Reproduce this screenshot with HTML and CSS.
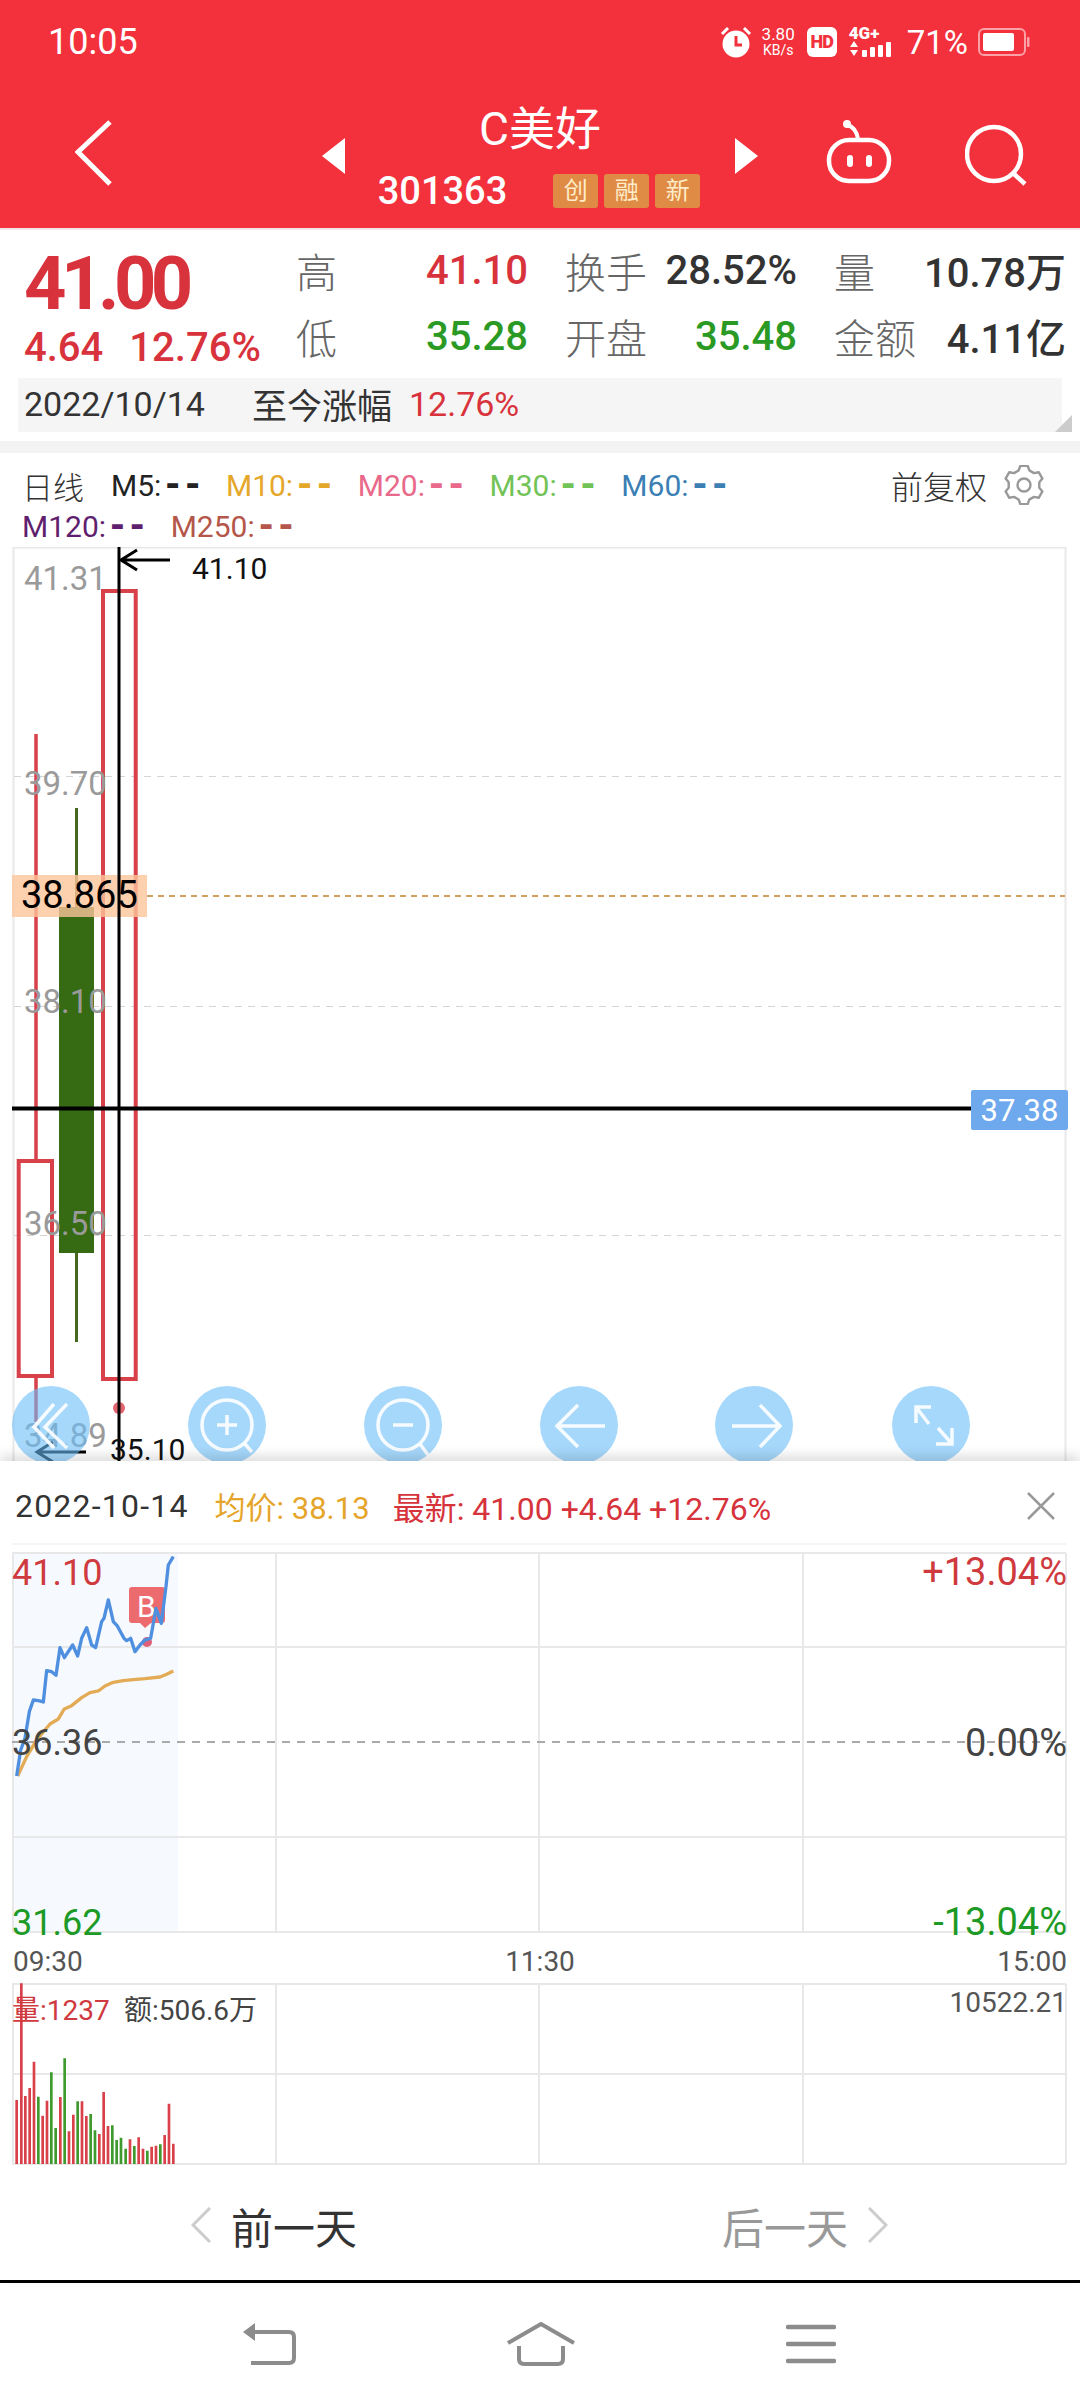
FILE: index.html
```html
<!DOCTYPE html>
<html lang="zh-CN">
<head>
    <meta charset="UTF-8">
    <meta name="viewport" content="width=device-width, initial-scale=1.0">
    <title>C美好 301363</title>
    <link rel="stylesheet" href="styles.css">
</head>
<body>

    <header class="top">
        <div class="status">
            <span class="clock">10:05</span>
            <div class="status-icons">
                <svg class="ico-alarm" width="32" height="32" viewBox="0 0 32 32">
                    <circle cx="16" cy="18" r="13.5" fill="#fff"/>
                    <path d="M2 8 L8 2 M30 8 L24 2" stroke="#fff" stroke-width="3" fill="none"/>
                    <path d="M16 10 V19 H22" stroke="#f3313c" stroke-width="3" fill="none"/>
                </svg>
                <div class="netspeed"><span>3.80</span><span class="unit">KB/s</span></div>
                <span class="hd">HD</span>
                <div class="signal">
                    <span class="lte">4G+</span>
                    <svg width="48" height="18" viewBox="0 0 48 18">
                        <path d="M1 7 L5 1 L9 7 Z M1 10 L9 10 L5 16 Z" fill="#fff"/>
                        <rect x="13" y="10" width="5" height="7" rx="1" fill="#fff"/>
                        <rect x="21" y="7" width="5" height="10" rx="1" fill="#fff"/>
                        <rect x="29" y="5" width="5" height="12" rx="1" fill="#fff"/>
                        <rect x="37" y="2" width="5" height="15" rx="1" fill="#fff"/>
                    </svg>
                </div>
                <span class="pct">71%</span>
                <svg width="52" height="28" viewBox="0 0 52 28">
                    <rect x="1" y="1" width="46" height="26" rx="5" fill="none" stroke="#fff" stroke-opacity=".55" stroke-width="2"/>
                    <rect x="5" y="5" width="31" height="18" rx="2" fill="#fff"/>
                    <rect x="49" y="9" width="2.5" height="10" rx="1" fill="#fff" fill-opacity=".55"/>
                </svg>
            </div>
        </div>

        <nav class="nav">
            <div class="nav-left">
                <svg width="40" height="68" viewBox="0 0 40 68">
                    <path d="M35 3 L3 33 L35 65" fill="none" stroke="#fff" stroke-width="5"/>
                </svg>
            </div>
            <div class="nav-mid">
                <svg width="23" height="36" viewBox="0 0 23 36"><path d="M23 0 V36 L0 18 Z" fill="#fff"/></svg>
                <div class="name">
                    <div class="title">C美好</div>
                    <div class="code-row">
                        <span class="code">301363</span>
                        <div class="tags">
                            <span class="tag">创</span>
                            <span class="tag">融</span>
                            <span class="tag">新</span>
                        </div>
                    </div>
                </div>
                <svg width="23" height="36" viewBox="0 0 23 36"><path d="M0 0 V36 L23 18 Z" fill="#fff"/></svg>
            </div>
            <div class="nav-right">
                <svg width="66" height="66" viewBox="0 0 66 66">
                    <path d="M21 7 Q30 9 32 21" fill="none" stroke="#fff" stroke-width="4"/>
                    <circle cx="21" cy="6" r="4" fill="#fff"/>
                    <rect x="3" y="22" width="60" height="41" rx="20" fill="none" stroke="#fff" stroke-width="4.5"/>
                    <rect x="21" y="37" width="6" height="12" rx="3" fill="#fff"/>
                    <rect x="40" y="37" width="6" height="12" rx="3" fill="#fff"/>
                </svg>
                <svg class="search" width="62" height="62" viewBox="0 0 62 62">
                    <circle cx="29" cy="30" r="27" fill="none" stroke="#fff" stroke-width="4.5"/>
                    <path d="M48 49 L60 60" stroke="#fff" stroke-width="4.5"/>
                </svg>
            </div>
        </nav>
    </header>

    <section class="quote">
        <div class="quote-main">
            <div class="price">
                <div class="last">41.00</div>
                <div class="change"><span>4.64</span><span>12.76%</span></div>
            </div>
            <div class="fields">
                <div class="field"><span class="k">高</span><span class="v red">41.10</span></div>
                <div class="field"><span class="k">换手</span><span class="v">28.52%</span></div>
                <div class="field"><span class="k">量</span><span class="v">10.78万</span></div>
                <div class="field"><span class="k">低</span><span class="v green">35.28</span></div>
                <div class="field"><span class="k">开盘</span><span class="v green">35.48</span></div>
                <div class="field"><span class="k">金额</span><span class="v">4.11亿</span></div>
            </div>
        </div>
        <div class="since">
            <span class="since-date">2022/10/14</span>
            <span class="since-label">至今涨幅</span>
            <span class="since-val">12.76%</span>
            <i class="corner"></i>
        </div>
    </section>

    <div class="band"></div>

    <section class="legend">
        <div class="legend-row">
            <span class="ma-name">日线</span>
            <span class="ma c-black">M5:<b>--</b></span>
            <span class="ma c-yellow">M10:<b>--</b></span>
            <span class="ma c-pink">M20:<b>--</b></span>
            <span class="ma c-lime">M30:<b>--</b></span>
            <span class="ma c-blue">M60:<b>--</b></span>
            <span class="adjust">前复权</span>
            <svg class="gear" width="40" height="40" viewBox="0 0 40 40">
                <path d="M14.7 5.4 L16.3 .9 H23.7 L25.3 5.4 L30 8.1 L34.7 7.2 L38.4 13.6 L35.3 17.3 V22.7 L38.4 26.4 L34.7 32.8 L30 31.9 L25.3 34.6 L23.7 39.1 H16.3 L14.7 34.6 L10 31.9 L5.3 32.8 L1.6 26.4 L4.7 22.7 V17.3 L1.6 13.6 L5.3 7.2 L10 8.1 Z" fill="none" stroke="#999" stroke-width="2.4" stroke-linejoin="round"/>
                <circle cx="20" cy="20" r="6.5" fill="none" stroke="#999" stroke-width="2.4"/>
            </svg>
        </div>
        <div class="legend-row second">
            <span class="ma c-purple">M120:<b>--</b></span>
            <span class="ma c-brown">M250:<b>--</b></span>
        </div>
    </section>

    <!-- k line, numbers are screen coordinates -->
    <svg class="kline" width="1080" height="914" viewBox="0 547 1080 914">
        <rect x="13.5" y="547.5" width="1052" height="930" fill="#fff" stroke="#e8e8e8" stroke-width="2"/>
        <g stroke="#d5d5d5" stroke-width="1" stroke-dasharray="7 6">
            <path d="M14 776.5 H1065 M14 1006.5 H1065 M14 1235.5 H1065"/>
        </g>
        <path d="M147 896 H1065" stroke="#d0a060" stroke-width="2" stroke-dasharray="6 5"/>

        <!-- candles -->
        <path d="M36 734 V1160 M36 1377 V1422" stroke="#d8404a" stroke-width="3.5"/>
        <rect x="18.7" y="1161" width="33.300" height="215" fill="none" stroke="#d8404a" stroke-width="4"/>
        <path d="M76.5 808 V1342" stroke="#47691f" stroke-width="3"/>
        <rect x="59" y="907" width="35" height="346" fill="#366b14"/>
        <rect x="103" y="591" width="32.700" height="788" fill="none" stroke="#d8404a" stroke-width="4"/>
        <circle cx="119" cy="1408" r="6" fill="#e2646e"/>

        <g class="axis">
            <text x="24" y="590">41.31</text>
            <text x="24" y="795">39.70</text>
            <text x="24" y="1013">38.10</text>
            <text x="24" y="1235">36.50</text>
            <text x="24" y="1447">34.89</text>
        </g>

        <rect x="12" y="875" width="135" height="42" fill="#fcc49a" fill-opacity=".8"/>
        <text class="mark-big" x="21" y="908">38.865</text>

        <path d="M12 1108.500 H972" stroke="#000" stroke-width="4"/>
        <path d="M119 547 V1461" stroke="#000" stroke-width="3"/>
        <rect x="971" y="1090" width="97" height="40" rx="2" fill="#6ea9ee"/>
        <text class="tip" x="1019.500" y="1121">37.38</text>

        <path d="M170 560 H121 M137 550 L121 560 L137 570" fill="none" stroke="#000" stroke-width="3"/>
        <text class="mark" x="192" y="579">41.10</text>
        <path d="M86 1452 H37 M53 1442 L37 1452 L53 1462" fill="none" stroke="#000" stroke-width="3"/>
        <text class="mark" x="110" y="1460">35.10</text>

        <!-- tool buttons -->
        <g class="tools">
            <circle cx="51" cy="1425" r="39"/>
            <circle cx="227" cy="1425" r="39"/>
            <circle cx="403" cy="1425" r="39"/>
            <circle cx="579" cy="1425" r="39"/>
            <circle cx="754" cy="1425" r="39"/>
            <circle cx="931" cy="1425" r="39"/>
        </g>
        <g class="tool-ico">
            <path d="M67 1404 L45 1427 L67 1448 M54 1404 L34 1427 L54 1448"/>
            <circle cx="227" cy="1425" r="25"/>
            <path d="M217 1425 H237 M227 1415 V1435 M244 1443 L252 1452"/>
            <circle cx="403" cy="1425" r="25"/>
            <path d="M393 1425 H413 M420 1444 L428 1455"/>
            <path d="M605 1426 H557 M578 1405 L557 1426 L578 1447"/>
            <path d="M732 1426 H780 M760 1405 L780 1426 L760 1447"/>
            <path d="M916 1423 V1407 H931 M916 1407 L929 1424 M952 1428 V1444 H936 M952 1444 L938 1428"/>
        </g>
    </svg>

    <section class="sheet">
        <div class="sheet-head">
            <span class="sheet-date">2022-10-14</span>
            <span class="sheet-avg">均价: 38.13</span>
            <span class="sheet-new">最新: 41.00 +4.64 +12.76%</span>
            <svg class="close" width="28" height="28" viewBox="0 0 28 28">
                <path d="M1 1 L27 27 M27 1 L1 27" stroke="#999" stroke-width="2.5"/>
            </svg>
        </div>

        <svg class="minute" width="1080" height="640" viewBox="0 1530 1080 640">
            <rect x="14" y="1553" width="164" height="379" fill="#f6f9fe"/>
            <path d="M12 1544 H1066" stroke="#f2f2f2" stroke-width="1.5"/>
            <g stroke="#e8e8e8" stroke-width="2">
                <path d="M13 1553 V1932 M276 1553 V1932 M539 1553 V1932 M803 1553 V1932 M1066 1553 V1932"/>
                <path d="M12 1553 H1066 M12 1647 H1066 M12 1837 H1066 M12 1932 H1066"/>
                <path d="M13 1984 V2164 M276 1984 V2164 M539 1984 V2164 M803 1984 V2164 M1066 1984 V2164"/>
                <path d="M12 1984 H1066 M12 2074 H1066 M12 2164 H1066"/>
            </g>
            <path d="M12 1742 H1066" stroke="#aaa" stroke-width="2" stroke-dasharray="8 7"/>

            <path d="M132 1587 H162 Q165 1587 165 1590 V1620 Q165 1623 162 1623 H151 L145 1628 L140 1623 H132 Q129 1623 129 1620 V1590 Q129 1587 132 1587 Z" fill="#ec6b6f"/>
            <text class="b-mark" x="137" y="1617">B</text>
            <circle cx="147" cy="1642" r="5" fill="#e0607a"/>

            <g transform="translate(0 1530) scale(.3333)">
                <polyline class="avg-line" points="53,738 80,680 110,630 150,582 175,567 193,537 215,527 245,503 270,488 295,483 315,468 340,457 370,452 400,449 435,446 480,441 500,433 520,423"/>
                <polyline class="price-line" points="50,738 62,660 75,625 88,545 100,510 115,512 130,516 140,422 155,425 168,436 180,353 193,383 218,345 233,378 245,325 260,293 275,345 287,353 305,275 312,265 325,210 340,275 352,288 372,325 380,332 392,325 405,365 420,345 435,330 452,325 468,235 484,280 498,170 505,105 520,80"/>
            </g>

            <text class="p-label red-t" x="12" y="1585">41.10</text>
            <text class="p-label dark-t" x="12" y="1755">36.36</text>
            <text class="p-label green-t" x="12" y="1935">31.62</text>
            <text class="p-right red-t end" x="1067" y="1585">+13.04%</text>
            <text class="p-right dark-t end" x="1067" y="1756">0.00%</text>
            <text class="p-right green-t end" x="1067" y="1935">-13.04%</text>

            <text class="t-label" x="13" y="1971">09:30</text>
            <text class="t-label mid" x="540" y="1971">11:30</text>
            <text class="t-label end" x="1067" y="1971">15:00</text>

            <!-- volume bars, x and y in 3x units of the crop -->
            <g transform="translate(0 1950) scale(.3333)" stroke-width="8">
                <path class="vol-red" d="M50 642V450 M64 642V100 M76 642V438 M89 642V414 M102 642V335 M128 642V497 M141 642V452 M181 642V441 M207 642V544 M220 642V494 M246 642V454 M259 642V498 M298 642V552 M311 642V426 M324 642V528 M390 642V568 M416 642V562 M429 642V596 M455 642V590 M468 642V587 M494 642V555 M507 642V461 M520 642V581"/>
                <path class="vol-green" d="M115 642V440 M154 642V367 M167 642V534 M194 642V325 M233 642V454 M272 642V492 M285 642V541 M337 642V526 M350 642V570 M363 642V563 M377 642V596 M403 642V588 M442 642V602 M481 642V583"/>
            </g>
            <text class="v-label red-t" x="12" y="2020">量:1237</text>
            <text class="v-label dark-t" x="124" y="2020">额:506.6万</text>
            <text class="v-label grey-t end" x="1067" y="2012">10522.21</text>
        </svg>

        <div class="daynav">
            <div class="day prev">
                <svg width="20" height="36" viewBox="0 0 20 36"><path d="M19 1 L2 18 L19 35" fill="none" stroke="#ccc" stroke-width="3"/></svg>
                <span>前一天</span>
            </div>
            <div class="day next">
                <span>后一天</span>
                <svg width="20" height="36" viewBox="0 0 20 36"><path d="M1 1 L18 18 L1 35" fill="none" stroke="#ccc" stroke-width="3"/></svg>
            </div>
        </div>
    </section>

    <footer class="sysbar">
        <svg width="54" height="42" viewBox="0 0 54 42">
            <path d="M1 9 L13 0 V18 Z" fill="#8c8c8c"/>
            <path d="M10 9 H47 Q52 9 52 14 V35 Q52 40 47 40 H9" fill="none" stroke="#8c8c8c" stroke-width="4"/>
        </svg>
        <svg width="70" height="44" viewBox="0 0 70 44">
            <path d="M2 21 L35 2 L68 21" fill="none" stroke="#8c8c8c" stroke-width="4"/>
            <path d="M13 24 V37 Q13 42 18 42 H52 Q57 42 57 37 V24" fill="none" stroke="#8c8c8c" stroke-width="4"/>
        </svg>
        <svg width="50" height="40" viewBox="0 0 50 40">
            <path d="M2 3 H48 M2 20 H48 M2 37 H48" stroke="#8c8c8c" stroke-width="4.500" stroke-linecap="round"/>
        </svg>
    </footer>

</body>
</html>
```

FILE: styles.css
```css
* {
    box-sizing: border-box;
}

body {
    margin: 0;
    width: 1080px;
    height: 2408px;
    overflow: hidden;
    background: #fff;
    font-family: Roboto, "Noto Sans CJK SC", sans-serif;
    color: #333;
}

svg {
    display: block;
}

/* red header */
.top {
    height: 230px;
    background: #f3313c;
    color: #fff;
    border-bottom: 2px solid #f0e4e4;
}

.status {
    height: 84px;
    padding: 0 50px 0 48px;
    display: flex;
    align-items: center;
    justify-content: space-between;
}

.clock {
    font-size: 36px;
}

.status-icons {
    display: flex;
    align-items: center;
}

.ico-alarm {
    margin-right: 10px;
}

.netspeed {
    display: flex;
    flex-direction: column;
    align-items: center;
    font-size: 17px;
    line-height: 16px;
    margin-right: 12px;
}

.netspeed .unit {
    font-size: 14px;
}

.hd {
    width: 30px;
    height: 30px;
    background: #fff;
    color: #f3313c;
    border-radius: 6px;
    font-size: 18px;
    font-weight: 900;
    line-height: 30px;
    text-align: center;
    letter-spacing: -1px;
    margin-right: 12px;
}

.signal {
    width: 48px;
    margin-right: 10px;
}

.lte {
    display: block;
    font-size: 17px;
    font-weight: 900;
    line-height: 14px;
}

.pct {
    font-size: 33px;
    margin-right: 10px;
}

.nav {
    height: 144px;
    display: grid;
    grid-template-columns: 300px 480px 300px;
    align-items: center;
}

.nav-left {
    padding: 0 0 6px 75px;
}

.nav-mid {
    display: flex;
    align-items: center;
    justify-content: space-between;
    padding: 0 22px;
}

.name {
    display: flex;
    flex-direction: column;
    align-items: center;
}

.title {
    font-size: 46px;
    line-height: 54px;
}

.code-row {
    display: flex;
    align-items: center;
    gap: 46px;
    margin-top: 16px;
    margin-left: -2px;
}

.code {
    font-size: 38px;
    line-height: 38px;
    font-weight: 500;
}

.tags {
    display: flex;
    gap: 6px;
}

.tag {
    width: 45px;
    height: 34px;
    background: #e08b45;
    color: #ffecc8;
    border-radius: 3px;
    font-size: 24px;
    line-height: 34px;
    text-align: center;
}

.nav-right {
    display: flex;
    align-items: center;
    justify-content: flex-end;
    gap: 73px;
    padding: 0 53px 10px 0;
}

.search {
    margin-top: 8px;
}

/* quote block */
.quote {
    height: 211px;
    padding: 0 18px;
}

.quote-main {
    height: 148px;
    display: flex;
}

.price {
    flex: none;
    width: 278px;
    padding-left: 6px;
    color: #d8323c;
}

.last {
    font-size: 74px;
    font-weight: 700;
    letter-spacing: -5.5px;
    line-height: 74px;
    margin-top: 17px;
}

.change {
    display: flex;
    gap: 26px;
    font-size: 40px;
    font-weight: 500;
    line-height: 44px;
    margin-top: 5px;
}

.fields {
    flex: none;
    display: grid;
    grid-template-columns: repeat(3, 232px);
    grid-auto-rows: 66px;
    column-gap: 37px;
    padding-top: 7px;
    align-content: start;
}

.field {
    display: flex;
    align-items: center;
    justify-content: space-between;
    font-size: 40px;
}

.k {
    font-size: 41px;
    font-weight: 300;
    color: #666;
}

.v {
    font-weight: 500;
    color: #333;
}

.v.red {
    color: #d8323c;
}

.v.green {
    color: #2a9a24;
}

.since {
    position: relative;
    height: 54px;
    background: #f5f5f5;
    display: flex;
    align-items: center;
    padding: 0 0 3px 6px;
    font-size: 34px;
}

.since-label {
    margin-left: 47px;
    font-size: 35px;
}

.since-val {
    margin-left: 17px;
    color: #d8323c;
}

.corner {
    position: absolute;
    right: -10px;
    bottom: 0;
    border-style: solid;
    border-width: 0 0 17px 17px;
    border-color: transparent transparent #ccc transparent;
}

.band {
    height: 12px;
    background: #f3f3f3;
}

/* moving average legend */
.legend {
    height: 94px;
    padding: 11px 22px 0;
}

.legend-row {
    display: flex;
    align-items: center;
    gap: 25px;
    height: 42px;
    font-size: 30px;
}

.legend-row.second {
    height: 36px;
    margin-top: 2px;
}

.ma b {
    font-family: "Liberation Mono", monospace;
    font-size: 38px;
    font-weight: 700;
    letter-spacing: -3px;
    line-height: 30px;
}

.ma-name {
    color: #333;
    font-weight: 300;
    font-size: 31px;
    margin-right: 2px;
}

.adjust {
    margin-left: auto;
    margin-right: -8px;
    font-size: 32px;
    font-weight: 300;
}

.gear {
    margin-right: 14px;
}

.c-black { color: #222; }
.c-yellow { color: #e5a72a; }
.c-pink { color: #e8698a; }
.c-lime { color: #72c356; }
.c-blue { color: #3b7fb4; }
.c-purple { color: #5f1f6e; }
.c-brown { color: #b5564a; }

/* k line */
.axis text {
    font-size: 33px;
    fill: #9a9a9a;
}

.mark {
    font-size: 30px;
    fill: #111;
}

.mark-big {
    font-size: 38px;
    fill: #000;
}

.tip {
    font-size: 31px;
    fill: #fff;
    text-anchor: middle;
}

.tools circle {
    fill: rgba(107, 190, 248, .6);
}

.tool-ico path,
.tool-ico circle {
    fill: none;
    stroke: #fff;
    stroke-width: 3.5;
    opacity: .9;
}

/* bottom sheet */
.sheet {
    position: relative;
    background: #fff;
    box-shadow: 0 -6px 10px rgba(0, 0, 0, .12);
}

.sheet-head {
    height: 69px;
    padding: 20px 25px 0 15px;
    display: flex;
    align-items: center;
    font-size: 32px;
}

.sheet-date {
    letter-spacing: 1.2px;
    color: #333;
}

.sheet-avg {
    margin-left: 26px;
    font-size: 31px;
    color: #e5a52a;
}

.sheet-new {
    margin-left: 23px;
    color: #d6333c;
}

.close {
    margin-left: auto;
}

.red-t { fill: #cf3a3f; }
.green-t { fill: #1c9a25; }
.dark-t { fill: #444; }
.grey-t { fill: #555; }

.p-label {
    font-size: 36px;
}

.p-right {
    font-size: 38px;
}

.t-label {
    font-size: 28px;
    fill: #555;
}

.v-label {
    font-size: 28px;
}

.end {
    text-anchor: end;
}

.mid {
    text-anchor: middle;
}

.b-mark {
    font-size: 30px;
    fill: #fff;
}

.price-line,
.avg-line {
    fill: none;
    stroke-width: 10;
    stroke-linejoin: round;
}

.price-line {
    stroke: #4f8fe0;
}

.avg-line {
    stroke: #e3ab55;
}

.vol-red {
    stroke: #d8404a;
}

.vol-green {
    stroke: #3f9a2e;
}

.daynav {
    height: 113px;
    display: grid;
    grid-template-columns: 1fr 1fr;
    border-bottom: 3px solid #000;
    font-size: 42px;
}

.day {
    display: flex;
    align-items: center;
    gap: 20px;
}

.prev {
    padding-left: 191px;
    color: #333;
}

.next {
    justify-content: flex-end;
    padding-right: 192px;
    color: #999;
}

.sysbar {
    height: 125px;
    padding: 0 244px 3px 242px;
    display: flex;
    align-items: center;
    justify-content: space-between;
}
```
